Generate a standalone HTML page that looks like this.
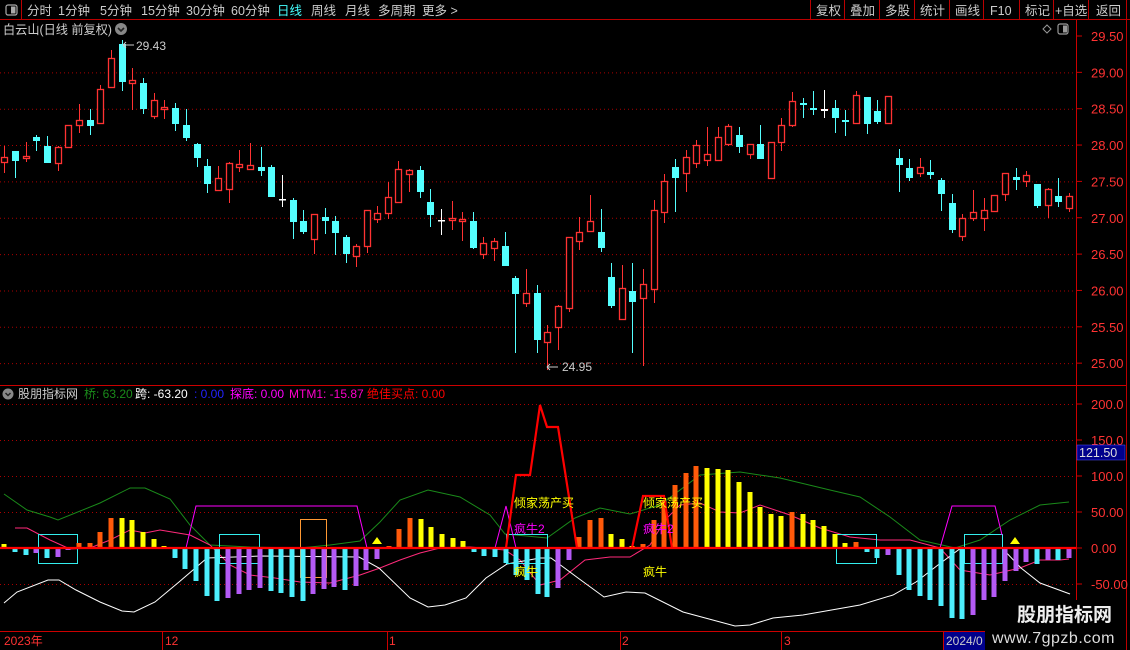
<!DOCTYPE html>
<html><head><meta charset="utf-8"><style>
html,body{margin:0;padding:0;background:#000;width:1130px;height:650px;overflow:hidden}
svg{display:block;font-family:"Liberation Sans","Noto Sans CJK SC",sans-serif}
</style></head><body>
<svg id="s" width="1130" height="650" viewBox="0 0 1130 650" xmlns="http://www.w3.org/2000/svg">
<rect width="1130" height="650" fill="#000"/>
<line x1="0" y1="19.5" x2="1130" y2="19.5" stroke="#b00" />
<line x1="21.5" y1="0" x2="21.5" y2="19" stroke="#b00"/>
<rect x="6" y="5" width="11" height="10" rx="2" fill="none" stroke="#aaa" stroke-width="1.2"/>
<rect x="11" y="6.5" width="4.5" height="7" fill="#aaa"/>
<g font-size="12.5" fill="#ccc">
<text x="27" y="15">分时</text><text x="58" y="15">1分钟</text><text x="100" y="15">5分钟</text><text x="141" y="15">15分钟</text><text x="186" y="15">30分钟</text><text x="231" y="15">60分钟</text>
<text x="277" y="15" fill="#4ff">日线</text><text x="311" y="15">周线</text><text x="345" y="15">月线</text><text x="378" y="15">多周期</text><text x="422" y="15">更多 &gt;</text>
<text x="816" y="15">复权</text><text x="850" y="15">叠加</text><text x="885" y="15">多股</text><text x="920" y="15">统计</text><text x="955" y="15">画线</text><text x="990" y="15">F10</text><text x="1025" y="15">标记</text><text x="1055" y="15">+自选</text><text x="1096" y="15">返回</text>
</g>
<g stroke="#b00"><line x1="810.5" y1="0" x2="810.5" y2="19"/><line x1="844.5" y1="0" x2="844.5" y2="19"/><line x1="879.5" y1="0" x2="879.5" y2="19"/><line x1="914.5" y1="0" x2="914.5" y2="19"/><line x1="949.5" y1="0" x2="949.5" y2="19"/><line x1="983.5" y1="0" x2="983.5" y2="19"/><line x1="1019.5" y1="0" x2="1019.5" y2="19"/><line x1="1053.5" y1="0" x2="1053.5" y2="19"/><line x1="1088.5" y1="0" x2="1088.5" y2="19"/><line x1="1126.5" y1="0" x2="1126.5" y2="650"/></g>
<text x="3" y="34" font-size="12.5" fill="#ccc" textLength="109" lengthAdjust="spacingAndGlyphs">白云山(日线 前复权)</text>
<circle cx="121" cy="29" r="6" fill="#888"/><path d="M118 28 L121 31 L124 28" stroke="#222" stroke-width="1.6" fill="none"/>
<path d="M1047 25 L1051 29 L1047 33 L1043 29 Z" fill="none" stroke="#999"/>
<rect x="1058" y="24" width="10" height="10" rx="2" fill="none" stroke="#999" stroke-width="1.2"/><rect x="1063" y="25.5" width="4" height="7" fill="#999"/>
<line x1="1076.5" y1="20" x2="1076.5" y2="632" stroke="#c00"/>
<line x1="0" y1="385.5" x2="1126" y2="385.5" stroke="#c00"/>
<line x1="0" y1="631.5" x2="1126" y2="631.5" stroke="#c00"/>
<g id="grid" stroke="#a00" stroke-dasharray="1,3"></g>
<g id="ax" font-size="13" fill="#f33"></g>
<g id="cand"></g>
<g font-size="12" fill="#ccc"><text x="136" y="50">29.43</text><text x="562" y="371">24.95</text></g>
<path d="M123 45 L134 45 M123 45 L126 42 M123 45 L126 48" stroke="#ccc" fill="none"/>
<path d="M547 367 L558 367 M547 367 L550 364 M547 367 L550 370" stroke="#ccc" fill="none"/>
<circle cx="8" cy="394" r="5.5" fill="#888"/><path d="M5.5 393 L8 395.5 L10.5 393" stroke="#222" stroke-width="1.5" fill="none"/>
<g font-size="12">
<text x="18" y="398" fill="#ccc">股朋指标网</text>
<text x="84" y="398" fill="#1a8a1a">桥: 63.20</text>
<text x="135" y="398" fill="#fff">跨: -63.20</text>
<text x="194" y="398" fill="#22f">: 0.00</text>
<text x="230" y="398" fill="#f0f">探底: 0.00</text>
<text x="289" y="398" fill="#f0c">MTM1: -15.87</text>
<text x="367" y="398" fill="#f00">绝佳买点: 0.00</text>
</g>
<g id="ind"></g>
<rect x="1077" y="445" width="48" height="15" fill="#00008b" stroke="#55f" stroke-width="0.5"/>
<text x="1079" y="457" font-size="12.5" fill="#ddd">121.50</text>
<g font-size="12" fill="#f33"><text x="4" y="645">2023年</text><text x="165" y="645">12</text><text x="389" y="645">1</text><text x="622" y="645">2</text><text x="784" y="645">3</text></g>
<g stroke="#c00"><line x1="162.5" y1="632" x2="162.5" y2="650"/><line x1="387.5" y1="632" x2="387.5" y2="650"/><line x1="620.5" y1="632" x2="620.5" y2="650"/><line x1="781.5" y1="632" x2="781.5" y2="650"/><line x1="943.5" y1="632" x2="943.5" y2="650"/></g>
<rect x="944" y="632" width="44" height="18" fill="#00008b"/>
<text x="946" y="645" font-size="12" fill="#ccc">2024/0</text>
<rect x="985" y="600" width="141" height="50" fill="#000"/>
<text x="1017" y="621" font-size="19" font-weight="bold" fill="#eee">股朋指标网</text>
<text x="992" y="643" font-size="16" fill="#ddd" letter-spacing="0.5">www.7gpzb.com</text>
</svg>
<script>
var NS="http://www.w3.org/2000/svg";
function el(p,t,a){var e=document.createElementNS(NS,t);for(var k in a)e.setAttribute(k,a[k]);document.getElementById(p).appendChild(e);return e;}
for(var i=0;i<10;i++){var y=36+i*36.35;if(i>0)el('grid','line',{x1:0,y1:y+.5,x2:1076,y2:y+.5});var t=el('ax','text',{x:1091,y:y+5});t.textContent=(29.5-i*0.5).toFixed(2);el('ax','line',{x1:1076,y1:y,x2:1082,y2:y,stroke:'#c00'});}
var iv=[[200,'200.0'],[150,'150.0'],[100,'100.0'],[50,'50.00'],[0,'0.00'],[-50,'-50.00']];
iv.forEach(function(v){var y=548-v[0]*0.72;if(v[0]!=0)el('grid','line',{x1:0,y1:y+.5,x2:1076,y2:y+.5});var t=el('ax','text',{x:1091,y:y+5});t.textContent=v[1];el('ax','line',{x1:1076,y1:y,x2:1082,y2:y,stroke:'#c00'});});
var C=[[4,146,157,162,173,'r'],[15,151,151,161,178,'c'],[26,142,156,158,162,'r'],[36,135,137,141,151,'c'],[47,136,146,163,163,'c'],[58,146,147,163,171,'r'],[68,125,125,147,147,'r'],[79,104,120,125,133,'r'],[90,109,120,126,135,'c'],[100,85,89,123,123,'r'],[111,50,58,87,87,'r'],[122,40,44,82,91,'c'],[132,68,80,83,110,'r'],[143,78,83,109,114,'c'],[154,93,100,116,119,'r'],[164,100,107,109,119,'r'],[175,103,108,124,131,'c'],[186,109,125,138,141,'c'],[197,143,144,158,167,'c'],[207,159,166,184,193,'c'],[218,166,178,190,190,'r'],[229,162,163,189,203,'r'],[239,150,164,167,172,'r'],[250,143,165,169,169,'r'],[261,147,167,171,176,'c'],[271,165,167,197,197,'c'],[282,175,199,199,207,'w'],[293,198,200,222,239,'c'],[303,210,221,232,234,'c'],[314,214,214,239,254,'r'],[325,208,217,221,234,'c'],[335,216,221,233,255,'c'],[346,235,237,254,263,'c'],[356,244,246,256,267,'r'],
[367,210,210,246,253,'r'],[377,206,213,219,223,'r'],[388,182,197,213,219,'r'],[398,161,169,202,203,'r'],[409,169,170,174,192,'r'],[420,166,170,192,198,'c'],[430,189,202,215,227,'c'],[441,209,220,220,235,'w'],[452,201,218,220,230,'r'],[462,212,219,221,241,'r'],[473,212,221,248,249,'c'],[483,237,243,254,259,'r'],[494,238,241,248,261,'r'],[505,232,246,266,266,'c'],[515,276,278,294,353,'c'],[526,269,293,303,307,'r'],[537,285,293,340,353,'c'],[547,325,332,342,370,'r'],[558,305,306,327,350,'r'],[569,237,237,308,312,'r'],[579,217,232,241,250,'r'],[590,195,221,231,231,'r'],[601,209,232,248,252,'c'],[611,263,277,306,308,'c'],[622,265,288,319,319,'r'],[632,263,291,302,353,'c'],[643,269,284,298,366,'r'],[654,200,210,289,303,'r'],[664,174,181,212,223,'r'],[675,159,167,178,212,'c'],[686,150,157,173,192,'r'],[696,140,145,163,168,'r'],
[707,127,154,160,166,'r'],[718,127,137,160,160,'r'],[728,124,126,144,146,'r'],[739,127,135,147,153,'c'],[750,144,144,154,159,'r'],[760,125,144,159,159,'c'],[771,142,142,178,178,'r'],[781,118,125,142,151,'r'],[792,92,101,125,127,'r'],[803,98,103,105,118,'c'],[813,91,108,110,115,'c'],[824,90,109,111,118,'w'],[835,100,108,118,133,'c'],[845,110,120,122,136,'c'],[856,91,95,123,123,'r'],[867,97,97,124,134,'c'],[877,100,111,122,124,'c'],[888,96,96,123,123,'r'],
[899,149,158,165,192,'c'],[909,159,168,178,181,'c'],[920,158,167,173,177,'r'],[930,160,172,175,179,'c'],[941,178,180,194,211,'c'],[952,194,203,230,233,'c'],[962,214,218,236,241,'r'],[973,190,212,218,221,'r'],[984,198,210,218,231,'r'],[994,195,195,211,212,'r'],[1005,173,173,194,201,'r'],[1016,168,177,180,190,'c'],[1026,171,175,181,187,'r'],[1037,184,184,206,208,'c'],[1048,188,189,205,218,'r'],[1058,178,196,202,207,'c'],[1069,193,196,208,212,'r']];
var col={r:'#ff3232',c:'#54ffff',w:'#ffffff'};
C.forEach(function(c){var k=col[c[5]];el('cand','line',{x1:c[0]+.5,y1:c[1],x2:c[0]+.5,y2:c[4],stroke:k});var h=Math.max(c[3]-c[2],1.5);
if(c[5]=='r')el('cand','rect',{x:c[0]-2.5,y:c[2]+.5,width:6,height:h,fill:'#000',stroke:k,'stroke-width':1.3});else el('cand','rect',{x:c[0]-3,y:c[2],width:7,height:h,fill:k});});
function pl(pts,st,w){el('ind','polyline',{points:pts,fill:'none',stroke:st,'stroke-width':w||1});}
pl('4,494 27,510 50,517 58,520 100,503 130,488 145,488 170,499 190,525 210,545 250,547 300,548 330,545 360,541 380,522 400,500 428,490 460,497 490,515 505,534 547,538 575,518 600,508 630,514 660,505 700,475 740,472 780,478 830,490 860,497 890,517 920,540 955,548 980,540 1010,520 1040,505 1069,502','#1a8a1a');
pl('15,528 27,528 50,540 70,549 90,548 110,540 130,530 145,533 160,530 190,535 210,545 230,565 250,575 275,578 300,582 330,583 360,575 380,568 400,560 420,553 440,548 470,547 505,550 520,560 540,585 560,580 585,560 610,557 630,557 650,545 665,520 680,505 700,503 720,512 740,513 760,505 790,515 820,528 850,537 880,540 910,540 940,548 960,570 990,575 1020,568 1040,560 1060,560 1069,559','#ff2a7a');
pl('4,603 17,592 48,580 59,580 76,590 100,602 122,611 134,612 155,602 179,582 207,558 262,556 359,557 379,568 410,598 428,607 445,605 466,598 486,578 507,564 540,558 551,558 578,578 604,597 626,592 645,593 683,612 735,626 750,625 773,618 803,615 860,605 893,595 916,582 938,565 961,548 1002,548 1021,568 1040,583 1070,594','#fff');
[[38,534,39,29],[219,534,40,29],[836,534,40,29],[964,534,38,29],[506,534,41,29]].forEach(function(b){el('ind','rect',{x:b[0]+.5,y:b[1]+.5,width:b[2],height:b[3],fill:'none',stroke:'#3ee'});});
el('ind','rect',{x:300.5,y:519.5,width:26,height:58,fill:'none',stroke:'#f93'});
var B=[[4,544,'y'],[15,552,'c'],[26,555,'c'],[36,553,'p'],[47,558,'c'],[58,557,'p'],[68,550,'p'],[79,543,'o'],[90,543,'o'],[100,532,'o'],[111,518,'o'],[122,518,'y'],[132,520,'y'],[143,532,'y'],[154,539,'y'],[164,546,'y'],[175,558,'c'],[185,569,'c'],[196,581,'c'],[207,596,'c'],[217,601,'c'],[228,598,'p'],[239,594,'p'],[249,590,'p'],[260,588,'p'],[271,591,'c'],[281,593,'c'],[292,597,'c'],[303,601,'c'],[313,594,'p'],[324,589,'p'],[334,587,'p'],[345,590,'c'],[356,586,'p'],[366,570,'p'],[377,559,'p'],[389,546,'o'],[399,529,'o'],[410,518,'o'],[421,519,'y'],[431,527,'y'],[442,534,'y'],[453,538,'y'],[463,541,'y'],[474,552,'c'],[484,556,'c'],[495,557,'c'],[506,563,'c'],[516,575,'c'],[527,580,'c'],[538,594,'c'],[547,597,'c'],[558,588,'p'],[569,560,'p'],[579,537,'o'],[590,520,'o'],[601,518,'o'],[611,534,'y'],[622,539,'y'],[632,546,'y'],[643,544,'o'],[654,520,'o'],[664,501,'o'],[675,485,'o'],[686,473,'o'],[696,466,'o'],[707,468,'y'],[718,469,'y'],[728,470,'y'],[739,482,'y'],[750,492,'y'],[760,507,'y'],[771,514,'y'],[781,516,'y'],[792,512,'o'],[803,514,'y'],[813,520,'y'],[824,526,'y'],[835,534,'y'],[845,543,'y'],[856,542,'o'],[867,552,'c'],[877,558,'c'],[888,555,'p'],[899,575,'c'],[909,590,'c'],[920,596,'c'],[930,600,'c'],[941,606,'c'],[952,618,'c'],[962,619,'c'],[973,615,'p'],[984,600,'p'],[994,597,'p'],[1005,581,'p'],[1016,571,'p'],[1026,562,'p'],[1037,564,'c'],[1048,560,'p'],[1058,560,'c'],[1069,558,'p']];
var bc={y:'#ffff00',o:'#ff5a0a',c:'#4ceefc',p:'#b45af5'};
B.forEach(function(b){var y0=Math.min(548,b[1]),h=Math.abs(b[1]-548);el('ind','rect',{x:b[0]-2.5,y:y0,width:5,height:Math.max(h,2),fill:bc[b[2]]});});
pl('186,548 196,506 357,506 367,548','#f0f');
pl('495,548 506,506 516,548','#f0f');
pl('940,548 952,506 995,506 1002,535','#f0f');
pl('506,548 516,475 530,475 540,405 547,427 558,427 577,548','#f00',2.2);
pl('632,548 643,496 664,496 672,548','#f00',2.2);
el('ind','line',{x1:0,y1:548,x2:1076,y2:548,stroke:'#f00','stroke-width':2.2});
el('ind','path',{d:'M372 544 L377 537 L382 544 Z',fill:'#ff0'});
el('ind','path',{d:'M1010 544 L1015 537 L1020 544 Z',fill:'#ff0'});
function tx(x,y,s,c){var t=el('ind','text',{x:x,y:y,'font-size':12,fill:c});t.textContent=s;}
tx(514,507,'倾家荡产买','#ff0');tx(643,507,'倾家荡产买','#ff0');
tx(514,533,'疯牛2','#f0f');tx(643,533,'疯牛2','#f0f');
tx(514,576,'疯牛','#ff0');tx(643,576,'疯牛','#ff0');
</script>
</body></html>
